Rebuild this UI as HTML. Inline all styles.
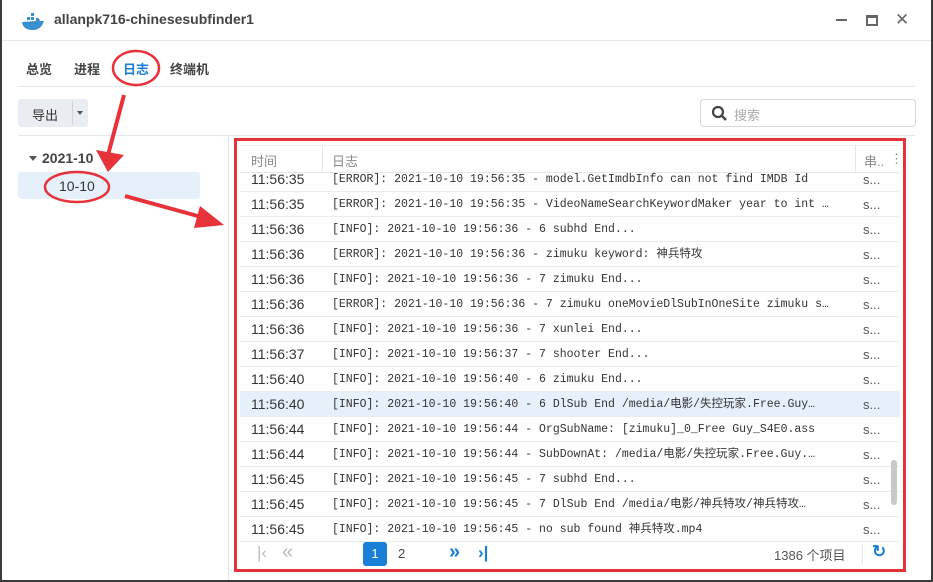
<!DOCTYPE html>
<html><head><meta charset="utf-8"><style>
*{margin:0;padding:0;box-sizing:border-box}
body{width:933px;height:582px;background:#3a3a3a;position:relative;overflow:hidden;font-family:"Liberation Sans","Noto Sans CJK SC",sans-serif;font-size:13px;color:#333}
.win{position:absolute;left:2px;top:0;width:929px;height:580px;background:#fff}
.abs{position:absolute}
.row{position:absolute;left:240px;width:660px;height:25px;border-bottom:1px solid #e8ecef;font-size:13px;line-height:25px}
.row .t{position:absolute;left:11px;font-family:"Liberation Sans",sans-serif;font-size:14px;color:#333}
.row .m{position:absolute;left:92px;font-family:"Liberation Mono","Noto Sans CJK SC",monospace;font-size:11.5px;color:#333;white-space:nowrap;width:515px;overflow:hidden}
.row .s{position:absolute;left:623px;color:#555}
</style></head><body>
<div class="win">
 <svg class="abs" style="left:18px;top:12px" width="26" height="20" viewBox="0 0 26 20"><path d="M2 10 Q3 18 13 18 Q21 18 24 9 L20 9 Q19 5 16 6 L16 9 Z" fill="#3a8fd0"/><rect x="7" y="5" width="3" height="3" fill="#3a8fd0"/><rect x="11" y="5" width="3" height="3" fill="#3a8fd0"/><rect x="11" y="1" width="3" height="3" fill="#3a8fd0"/></svg>
 <div class="abs" style="left:52px;top:11px;font-size:14px;font-weight:bold;color:#444">allanpk716-chinesesubfinder1</div>
 <div class="abs" style="left:834px;top:19px;width:11px;height:2px;background:#666"></div>
 <div class="abs" style="left:864px;top:15px;width:12px;height:11px;border:2px solid #666;border-top-width:3px"></div>
 <div class="abs" style="left:893px;top:10px;font-size:17px;color:#666">✕</div>
 <div class="abs" style="left:0;top:40px;width:929px;height:1px;background:#e3e6ea"></div>
 <div class="abs" style="left:24px;top:59px;font-size:13px;font-weight:bold;color:#444">总览</div>
 <div class="abs" style="left:72px;top:59px;font-size:13px;font-weight:bold;color:#444">进程</div>
 <div class="abs" style="left:121px;top:59px;font-size:13px;font-weight:bold;color:#1a7fd6">日志</div>
 <div class="abs" style="left:168px;top:59px;font-size:13px;font-weight:bold;color:#444">终端机</div>
 <div class="abs" style="left:16px;top:86px;width:897px;height:1px;background:#e3e6ea"></div>
 <div class="abs" style="left:16px;top:99px;width:70px;height:28px;background:#e9edf2;border-radius:3px"></div>
 <div class="abs" style="left:30px;top:105px;font-size:13px;color:#333">导出</div>
 <div class="abs" style="left:70px;top:101px;width:1px;height:24px;background:#cfd5dc"></div>
 <div class="abs" style="left:75px;top:111px;border:3.5px solid transparent;border-top:4px solid #555"></div>
 <div class="abs" style="left:698px;top:99px;width:216px;height:28px;border:1px solid #d5dae0;border-radius:4px"></div>
 <svg class="abs" style="left:709px;top:105px" width="16" height="16"><circle cx="7" cy="7" r="5" fill="none" stroke="#444" stroke-width="2.2"/><line x1="11" y1="11" x2="15" y2="15" stroke="#444" stroke-width="2.4"/></svg>
 <div class="abs" style="left:732px;top:105px;font-size:13px;color:#aaa">搜索</div>
 <div class="abs" style="left:16px;top:135px;width:897px;height:1px;background:#e3e6ea"></div>
 <div class="abs" style="left:226px;top:136px;width:1px;height:444px;background:#e3e6ea"></div>
 <div class="abs" style="left:27px;top:156px;border:4px solid transparent;border-top:5px solid #555"></div>
 <div class="abs" style="left:40px;top:150px;font-size:14px;font-weight:bold;color:#444">2021-10</div>
 <div class="abs" style="left:16px;top:172px;width:182px;height:27px;background:#e5f0fb;border-radius:3px"></div>
 <div class="abs" style="left:57px;top:178px;font-size:14px;color:#333">10-10</div>
</div>
<div class="abs" style="left:240px;top:145px;width:660px;height:28px;border-bottom:1px solid #e3e6ea;border-top:1px solid #eee"></div>
<div class="abs" style="left:251px;top:151px;font-size:13px;color:#888">时间</div>
<div class="abs" style="left:322px;top:146px;width:1px;height:26px;background:#e3e6ea"></div>
<div class="abs" style="left:332px;top:151px;font-size:13px;color:#888">日志</div>
<div class="abs" style="left:855px;top:146px;width:1px;height:26px;background:#e3e6ea"></div>
<div class="abs" style="left:864px;top:151px;font-size:13px;color:#888">串..</div>
<div class="abs" style="left:890px;top:151px;font-size:13px;color:#888">⋮</div>
<div class="row" style="top:167px"><span class="t">11:56:35</span><span class="m">[ERROR]: 2021-10-10 19:56:35 - model.GetImdbInfo can not find IMDB Id</span><span class="s">s...</span></div>
<div class="row" style="top:192px"><span class="t">11:56:35</span><span class="m">[ERROR]: 2021-10-10 19:56:35 - VideoNameSearchKeywordMaker year to int …</span><span class="s">s...</span></div>
<div class="row" style="top:217px"><span class="t">11:56:36</span><span class="m">[INFO]: 2021-10-10 19:56:36 - 6 subhd End...</span><span class="s">s...</span></div>
<div class="row" style="top:242px"><span class="t">11:56:36</span><span class="m">[ERROR]: 2021-10-10 19:56:36 - zimuku keyword: 神兵特攻</span><span class="s">s...</span></div>
<div class="row" style="top:267px"><span class="t">11:56:36</span><span class="m">[INFO]: 2021-10-10 19:56:36 - 7 zimuku End...</span><span class="s">s...</span></div>
<div class="row" style="top:292px"><span class="t">11:56:36</span><span class="m">[ERROR]: 2021-10-10 19:56:36 - 7 zimuku oneMovieDlSubInOneSite zimuku s…</span><span class="s">s...</span></div>
<div class="row" style="top:317px"><span class="t">11:56:36</span><span class="m">[INFO]: 2021-10-10 19:56:36 - 7 xunlei End...</span><span class="s">s...</span></div>
<div class="row" style="top:342px"><span class="t">11:56:37</span><span class="m">[INFO]: 2021-10-10 19:56:37 - 7 shooter End...</span><span class="s">s...</span></div>
<div class="row" style="top:367px"><span class="t">11:56:40</span><span class="m">[INFO]: 2021-10-10 19:56:40 - 6 zimuku End...</span><span class="s">s...</span></div>
<div class="row" style="top:392px;background:#e5f0fb"><span class="t">11:56:40</span><span class="m">[INFO]: 2021-10-10 19:56:40 - 6 DlSub End /media/电影/失控玩家.Free.Guy…</span><span class="s">s...</span></div>
<div class="row" style="top:417px"><span class="t">11:56:44</span><span class="m">[INFO]: 2021-10-10 19:56:44 - OrgSubName: [zimuku]_0_Free Guy_S4E0.ass</span><span class="s">s...</span></div>
<div class="row" style="top:442px"><span class="t">11:56:44</span><span class="m">[INFO]: 2021-10-10 19:56:44 - SubDownAt: /media/电影/失控玩家.Free.Guy.…</span><span class="s">s...</span></div>
<div class="row" style="top:467px"><span class="t">11:56:45</span><span class="m">[INFO]: 2021-10-10 19:56:45 - 7 subhd End...</span><span class="s">s...</span></div>
<div class="row" style="top:492px"><span class="t">11:56:45</span><span class="m">[INFO]: 2021-10-10 19:56:45 - 7 DlSub End /media/电影/神兵特攻/神兵特攻…</span><span class="s">s...</span></div>
<div class="row" style="top:517px"><span class="t">11:56:45</span><span class="m">[INFO]: 2021-10-10 19:56:45 - no sub found 神兵特攻.mp4</span><span class="s">s...</span></div>
<div class="abs" style="left:891px;top:460px;width:6px;height:45px;background:#c8c8c8;border-radius:3px"></div>
<div class="abs" style="left:257px;top:543px;font-size:17px;color:#bbb">|‹</div>
<div class="abs" style="left:282px;top:541px;font-size:20px;color:#bbb">«</div>
<div class="abs" style="left:363px;top:542px;width:24px;height:24px;background:#1a7fd6;border-radius:3px;color:#fff;text-align:center;line-height:24px;font-size:13px">1</div>
<div class="abs" style="left:398px;top:546px;font-size:13px;color:#444">2</div>
<div class="abs" style="left:449px;top:541px;font-size:20px;color:#1a7fd6;font-weight:bold">»</div>
<div class="abs" style="left:478px;top:543px;font-size:17px;color:#1a7fd6;font-weight:bold">›|</div>
<div class="abs" style="left:774px;top:545px;font-size:13px;color:#555">1386 个项目</div>
<div class="abs" style="left:862px;top:544px;width:1px;height:20px;background:#e3e6ea"></div>
<div class="abs" style="left:872px;top:542px;font-size:17px;color:#1a7fd6;font-weight:bold">↻</div>
<svg class="abs" style="left:0;top:0" width="933" height="582">
 <rect x="235.5" y="139.5" width="669" height="431" fill="none" stroke="#e8323a" stroke-width="3"/>
 <ellipse cx="136" cy="68" rx="23" ry="17" fill="none" stroke="#e8323a" stroke-width="2.5"/>
 <ellipse cx="77" cy="187" rx="32" ry="15" fill="none" stroke="#e8323a" stroke-width="2.5"/>
 <path d="M124 95 L108 155" stroke="#e8323a" stroke-width="4"/>
 <path d="M96 150 L108 172 L124 155 Z" fill="#e8323a"/>
 <path d="M125 196 L205 218" stroke="#e8323a" stroke-width="4"/>
 <path d="M200 206 L224 225 L194 228 Z" fill="#e8323a"/>
</svg>
</body></html>
